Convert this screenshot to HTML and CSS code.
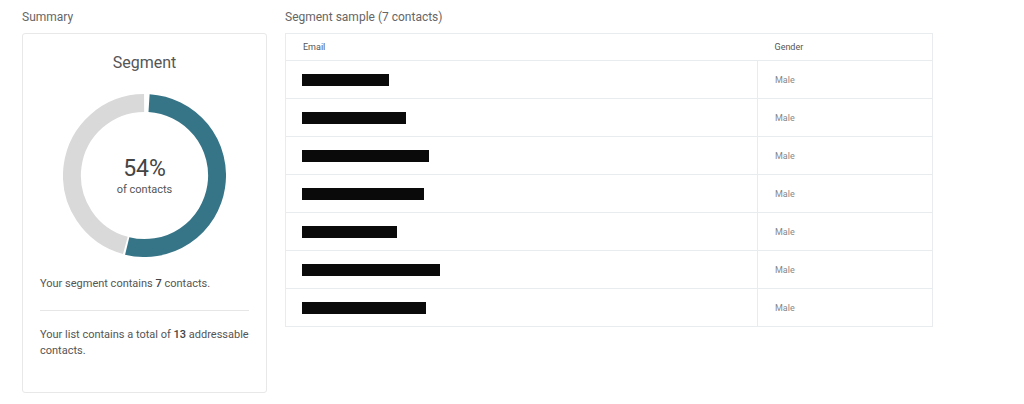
FILE: index.html
```html
<!DOCTYPE html>
<html lang="en">
<head>
  <meta charset="UTF-8">
  <meta name="viewport" content="width=device-width, initial-scale=1.0">
  <title>Segment</title>
  <link rel="stylesheet" href="styles.css">
</head>
<body>
  <div id="page">
    <div class="summary">
      <h2 class="section-title">Summary</h2>
      <div class="card">
        <h3 class="card-title">Segment</h3>
        <div class="donut">
          <svg width="163" height="163" viewBox="0 0 164 164">
            <path d="M 86.58 9.14 A 73 73 0 1 1 64.59 152.89" fill="none" stroke="#367487" stroke-width="18"/>
            <path d="M 62.74 152.41 A 73 73 0 0 1 81.6 9" fill="none" stroke="#d9d9d9" stroke-width="18"/>
          </svg>
          <div class="donut-label">
            <div class="percent">54%</div>
            <div class="of">of contacts</div>
          </div>
        </div>
        <p class="note">Your segment contains <b>7</b> contacts.</p>
        <hr class="divider">
        <p class="note">Your list contains a total of <b>13</b> addressable contacts.</p>
      </div>
    </div>

    <div class="sample">
      <h2 class="section-title">Segment sample (7 contacts)</h2>
      <table class="contacts">
        <thead>
          <tr><th class="email-col">Email</th><th>Gender</th></tr>
        </thead>
        <tbody>
          <tr><td class="email-col"><span class="redact" style="width:87px"></span></td><td>Male</td></tr>
          <tr><td class="email-col"><span class="redact" style="width:104px"></span></td><td>Male</td></tr>
          <tr><td class="email-col"><span class="redact" style="width:127px"></span></td><td>Male</td></tr>
          <tr><td class="email-col"><span class="redact" style="width:122px"></span></td><td>Male</td></tr>
          <tr><td class="email-col"><span class="redact" style="width:95px"></span></td><td>Male</td></tr>
          <tr><td class="email-col"><span class="redact" style="width:138px"></span></td><td>Male</td></tr>
          <tr><td class="email-col"><span class="redact" style="width:124px"></span></td><td>Male</td></tr>
        </tbody>
      </table>
    </div>
  </div>
</body>
</html>
```

FILE: styles.css
```css
body {
  font-family: Roboto, 'Liberation Sans', Arial, sans-serif;
  background-color: #fff;
  margin: 0;
  padding: 0;
  color: #555;
}

#page {
  display: flex;
  gap: 18px;
  padding: 8px 0 0 22px;
}

.section-title {
  font-size: 12px;
  font-weight: normal;
  color: #666;
  line-height: 18px;
  margin: 0 0 7px 0;
}

.summary {
  width: 245px;
}

.card {
  box-sizing: border-box;
  height: 360px;
  border: 1px solid #e8e8e8;
  border-radius: 3px;
  padding: 18px 17px 0 17px;
}

.card-title {
  font-size: 16px;
  font-weight: normal;
  color: #555;
  line-height: 22px;
  text-align: center;
  margin: 0;
}

.donut {
  position: relative;
  width: 163px;
  height: 163px;
  margin: 20px auto 0 auto;
}

.donut svg {
  display: block;
}

.donut-label {
  position: absolute;
  left: 0;
  right: 0;
  top: 61px;
  text-align: center;
}

.percent {
  font-size: 23px;
  line-height: 28px;
  color: #444;
}

.of {
  font-size: 11px;
  line-height: 14px;
  color: #555;
}

.note {
  font-size: 11px;
  line-height: 16px;
  color: #555;
  margin: 19px 0 0 0;
}

.note b {
  font-weight: 500;
  color: #444;
}

.divider {
  border: 0;
  border-top: 1px solid #e6e6e6;
  margin: 18px 0 0 0;
}

.divider + .note {
  margin-top: 16px;
}

.sample {
  width: 648px;
}

.contacts {
  width: 648px;
  border-collapse: collapse;
  border: 1px solid #e9ecef;
}

.contacts th {
  height: 26px;
  font-size: 9px;
  font-weight: normal;
  color: #555;
  text-align: left;
  padding: 0 17px;
  border-bottom: 1px solid #e9ecef;
}

.contacts td {
  height: 37px;
  font-size: 9px;
  color: #888;
  padding: 0 17px;
  border-bottom: 1px solid #e9ecef;
}

.contacts .email-col {
  width: 437px;
}

.contacts td.email-col {
  border-right: 1px solid #e9ecef;
}

.redact {
  display: inline-block;
  height: 12px;
  margin-left: -1px;
  background-color: #0a0a0a;
  vertical-align: middle;
}
```
